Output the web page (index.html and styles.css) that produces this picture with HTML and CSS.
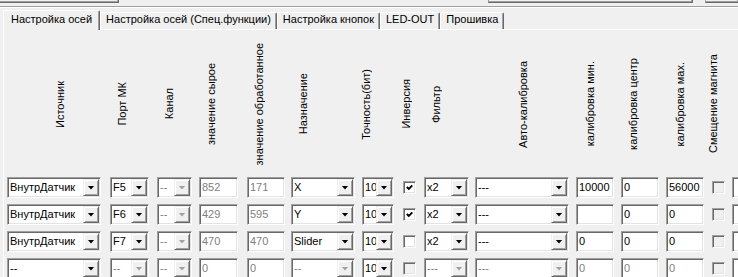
FILE: index.html
```html
<!DOCTYPE html>
<html lang="ru">
<head>
    <meta charset="UTF-8">
    <meta name="viewport" content="width=device-width, initial-scale=1.0">
    <title>Настройка осей</title>
    <link rel="stylesheet" href="styles.css">
</head>
<body>
    <div class="topbar">
        <div class="stub stub-a"></div>
        <div class="stub stub-b"></div>
        <div class="stub stub-c"></div>
    </div>
    <div class="rule"></div>

    <div class="tabs">
        <div class="tab active">Настройка осей</div>
        <div class="tab">Настройка осей (Спец.функции)</div>
        <div class="tab">Настройка кнопок</div>
        <div class="tab">LED-OUT</div>
        <div class="tab">Прошивка</div>
    </div>

    <div class="page">
        <div class="axes" id="axes">
            <div class="hd hd-src">Источник</div>
            <div class="hd">Порт МК</div>
            <div class="hd">Канал</div>
            <div class="hd">значение сырое</div>
            <div class="hd">значение обработанное</div>
            <div class="hd">Назначение</div>
            <div class="hd hd-prec">Точность(бит)</div>
            <div class="hd hd-inv">Инверсия</div>
            <div class="hd">Фильтр</div>
            <div class="hd hd-auto">Авто-калибровка</div>
            <div class="hd hd-wide">калибровка мин.</div>
            <div class="hd">калибровка центр</div>
            <div class="hd hd-wide">калибровка мах.</div>
            <div class="hd hd-mag">Смещение магнита</div>
            <div></div>
        </div>
    </div>

    <script>
        const columns = [
            ['combo', 'w94'], ['combo', 'w39'], ['combo', 'w35'], ['edit', 'w39'], ['edit', 'w38'],
            ['combo', 'w64'], ['combo', 'w32'], ['check', ''], ['combo', 'w45'], ['combo', 'w94'],
            ['edit', 'w38'], ['edit', 'w38'], ['edit', 'w38'], ['check', ''], ['edit', 'w40']
        ];

        const axes = [
            { values: ['ВнутрДатчик', 'F5', '--', '852', '171', 'X', '10', true, 'x2', '---', '10000', '0', '56000', false, ''], disabled: [2, 3, 4, 13] },
            { values: ['ВнутрДатчик', 'F6', '--', '429', '595', 'Y', '10', true, 'x2', '---', '', '0', '0', false, ''], disabled: [2, 3, 4, 13] },
            { values: ['ВнутрДатчик', 'F7', '--', '470', '470', 'Slider', '10', false, 'x2', '---', '0', '0', '0', false, ''], disabled: [2, 3, 4, 13] },
            { values: ['--', '--', '--', '0', '0', '--', '10', false, '---', '---', '0', '0', '0', false, ''], disabled: [1, 2, 3, 4, 5, 7, 8, 9, 10, 11, 12, 13] }
        ];

        const checkMark = '<svg width="7" height="7" viewBox="0 0 7 7"><polyline points="0.8,3 2.8,5 6.3,1.4" fill="none" stroke="#000" stroke-width="1.9"/></svg>';

        const grid = document.getElementById('axes');

        axes.forEach((axis) => {
            columns.forEach(([type, width], i) => {
                const cell = document.createElement('div');
                cell.className = `${type} ${width}`.trim();
                if (axis.disabled.includes(i)) cell.classList.add('off');

                const value = axis.values[i];
                if (type === 'combo') {
                    cell.innerHTML = `<span class="val">${value}</span><span class="btn"></span>`;
                } else if (type === 'check') {
                    if (value) cell.innerHTML = checkMark;
                } else {
                    cell.textContent = value;
                }
                grid.appendChild(cell);
            });
        });
    </script>
</body>
</html>
```

FILE: styles.css
```css
html, body {
    height: 100%;
    overflow: hidden;
}

body {
    margin: 0;
    background: #f0f0f0;
    font-family: "Liberation Sans", Arial, sans-serif;
    font-size: 11px;
    color: #000;
}

/* bottoms of the controls above the tab control */
.topbar {
    display: flex;
    height: 3px;
}

.stub {
    box-sizing: border-box;
    height: 3px;
    border-bottom: 1px solid #696969;
    border-right: 1px solid #696969;
    box-shadow: inset -1px -1px #a0a0a0;
}

.stub-a {
    width: 119px;
}

.stub-b {
    width: 205px;
    margin-left: 369px;
    border-left: 1px solid #a0a0a0;
}

.stub-c {
    flex: 1;
    margin-left: 12px;
    border-left: 1px solid #a0a0a0;
    border-right: none;
}

.rule {
    margin-top: 3px;
    border-top: 1px solid #a0a0a0;
    border-bottom: 1px solid #fff;
}

/* tabs */
.tabs {
    display: flex;
    align-items: flex-end;
    height: 19px;
    margin-top: 2px;
    padding-left: 3px;
}

.tab {
    border: 1px solid #fff;
    border-bottom: none;
    border-right-color: #696969;
    border-radius: 2px 2px 0 0;
    box-shadow: inset -1px 0 #a0a0a0;
    padding: 0 5px 3px;
    line-height: 13px;
    white-space: nowrap;
}

.tab.active {
    position: relative;
    z-index: 1;
    padding: 2px 7px 4px;
    margin-bottom: -1px;
    background: #f0f0f0;
}

.page {
    margin-left: 3px;
    border-top: 1px solid #fff;
    border-left: 1px solid #fff;
    padding: 7px 0 0 3px;
}

/* axes table */
.axes {
    display: grid;
    grid-template-columns: 103px 47px 42px 48px 44px 71px 41px 21px 51px 101px 45px 45px 46px 20px 40px;
    grid-template-rows: 134px;
    grid-auto-rows: 21px;
    row-gap: 6px;
}

.hd {
    writing-mode: vertical-rl;
    transform: rotate(180deg);
    align-self: center;
    justify-self: start;
    margin-left: 6px;
    line-height: 13px;
    white-space: nowrap;
}

.hd-src { margin-left: 47px; }
.hd-prec { margin-left: -2px; }
.hd-inv { margin-left: -3px; }
.hd-auto { margin-left: 42px; }
.hd-wide { margin-left: 8px; }
.hd-mag { margin-left: -5px; }

.combo,
.edit,
.check {
    box-sizing: border-box;
    border: 1px solid;
    border-color: #a0a0a0 #fff #fff #a0a0a0;
    box-shadow: inset 1px 1px #696969, inset -1px -1px #e3e3e3;
    background: #fff;
}

.combo,
.edit {
    height: 21px;
    padding: 1px;
}

.combo {
    display: flex;
}

.combo .val {
    flex: 1;
    padding-left: 1px;
    line-height: 17px;
    overflow: hidden;
    white-space: nowrap;
}

.combo .btn {
    flex: none;
    display: flex;
    align-items: center;
    justify-content: center;
    box-sizing: border-box;
    width: 16px;
    border: 1px solid;
    border-color: #f0f0f0 #696969 #696969 #f0f0f0;
    box-shadow: inset 1px 1px #fff, inset -1px -1px #a0a0a0;
    background: #f0f0f0;
}

.combo .btn::after {
    content: "";
    width: 7px;
    height: 4px;
    background: #000;
    clip-path: polygon(0 0, 100% 0, 50% 100%);
}

.edit {
    padding-left: 2px;
    line-height: 17px;
    white-space: nowrap;
    overflow: hidden;
}

.check {
    align-self: center;
    justify-self: start;
    display: flex;
    align-items: center;
    justify-content: center;
    width: 13px;
    height: 13px;
}

.off {
    color: #808080;
}

.combo.off .btn::after {
    background: #a0a0a0;
}

.check.off {
    background: #f0f0f0;
}

.w32 { width: 32px; }
.w35 { width: 35px; }
.w38 { width: 38px; }
.w39 { width: 39px; }
.w40 { width: 40px; }
.w45 { width: 45px; }
.w64 { width: 64px; }
.w94 { width: 94px; }
```
